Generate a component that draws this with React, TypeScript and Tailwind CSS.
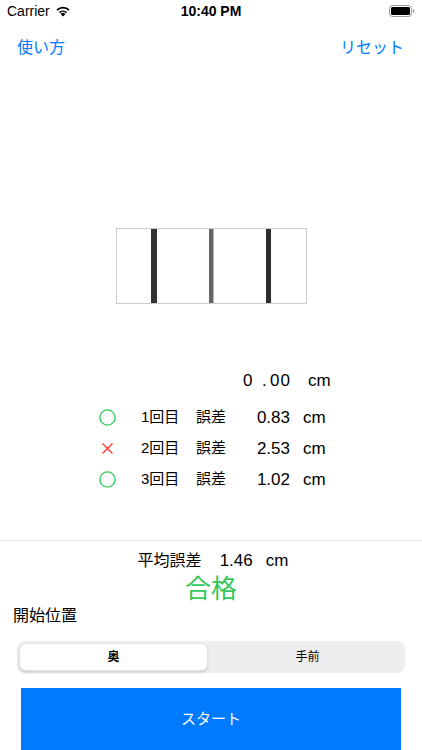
import React from 'react';

const results = [
  { label: '1回目', value: '0.83', ok: true },
  { label: '2回目', value: '2.53', ok: false },
  { label: '3回目', value: '1.02', ok: true },
];

function Wifi() {
  return (
    <svg width="16" height="12" viewBox="0 0 16 12">
      <path d="M8 11.5 L5.6 8.9 A3.4 3.4 0 0 1 10.4 8.9 Z" fill="#000" />
      <path d="M3.9 7.1 A5.8 5.8 0 0 1 12.1 7.1 L10.9 8.3 A4.1 4.1 0 0 0 5.1 8.3 Z" fill="#000" />
      <path d="M1.4 4.6 A9.3 9.3 0 0 1 14.6 4.6 L13.4 5.8 A7.6 7.6 0 0 0 2.6 5.8 Z" fill="#000" />
    </svg>
  );
}

function Battery() {
  return (
    <svg width="26" height="12" viewBox="0 0 26 12">
      <rect x="0.5" y="0.5" width="22" height="11" rx="3" fill="none" stroke="#000" strokeOpacity="0.4" />
      <rect x="2" y="2" width="19" height="8" rx="1.5" fill="#000" />
      <path d="M24 4 Q25.5 4 25.5 6 Q25.5 8 24 8 Z" fill="#000" fillOpacity="0.4" />
    </svg>
  );
}

function Mark({ ok }: { ok: boolean }) {
  return ok ? (
    <svg width="17" height="17" viewBox="0 0 17 17">
      <circle cx="8.5" cy="8.5" r="7.6" fill="none" stroke="#34c759" strokeWidth="1.4" />
    </svg>
  ) : (
    <svg width="17" height="17" viewBox="0 0 17 17">
      <path d="M3.5 3.5 L13.5 13.5 M13.5 3.5 L3.5 13.5" stroke="#ff3b30" strokeWidth="1.4" />
    </svg>
  );
}

export default function App() {
  return (
    <div className="w-[422px] h-[750px] overflow-hidden bg-white text-black font-['Liberation_Sans','Noto_Sans_CJK_JP',sans-serif]">
      {/* Status bar */}
      <div className="grid grid-cols-3 items-center h-[22px] px-[7px]">
        <div className="flex items-center gap-[5px] text-[14px]">
          <span>Carrier</span>
          <Wifi />
        </div>
        <div className="text-center text-[14px] font-semibold">10:40 PM</div>
        <div className="flex justify-end">
          <Battery />
        </div>
      </div>

      {/* Nav */}
      <div className="flex items-center justify-between h-[50px] pt-[2px] pl-[17px] pr-[18px] text-[16px] text-[#007aff]">
        <span>使い方</span>
        <span>リセット</span>
      </div>

      {/* Target box */}
      <div className="mt-[156px] mx-auto w-[191px] h-[76px] border border-[#cccccc]">
        <svg width="189" height="74" viewBox="0 0 189 74">
          <rect x="34" y="0" width="6" height="74" fill="#333333" />
          <rect x="92" y="0" width="4.5" height="74" fill="#666666" />
          <rect x="149" y="0" width="5" height="74" fill="#2e2e2e" />
        </svg>
      </div>

      {/* Current measurement */}
      <div className="mt-[61px] flex items-center h-[31px] pl-[243px] text-[17px]">
        <span className="inline-block w-[19px]">0</span>
        <span className="inline-block w-[8px]">.</span>
        <span className="tracking-[1px]">00</span>
        <span className="ml-[17px]">cm</span>
      </div>

      {/* Results */}
      <div className="mt-[5px]">
        {results.map((r) => (
          <div key={r.label} className="flex items-center h-[31px] pt-[2px] pl-[99px]">
            <div className="w-[17px] flex justify-center">
              <Mark ok={r.ok} />
            </div>
            <span className="ml-[25px] w-[55px] text-[15px]">{r.label}</span>
            <span className="w-[30px] text-[15px]">誤差</span>
            <span className="w-[64px] text-right text-[17px]">{r.value}</span>
            <span className="ml-[13px] text-[17px]">cm</span>
          </div>
        ))}
      </div>

      <div className="mt-[46px] h-px bg-[#e3e3e3]" />

      {/* Average */}
      <div className="mt-[9px] flex items-center justify-center h-[22px] pl-[4px]">
        <span className="text-[16px]">平均誤差</span>
        <span className="ml-[18px] text-[17px]">1.46</span>
        <span className="ml-[13px] text-[17px]">cm</span>
      </div>
      <div className="mt-[2px] h-[30px] flex items-center justify-center text-[26px] text-[#34c759]">合格</div>

      <div className="mt-[1px] h-[22px] flex items-center pl-[13px] text-[16px]">開始位置</div>

      {/* Segmented control */}
      <div className="mt-[14px] mx-[17px] h-[32px] rounded-[8px] bg-[#eeeef0] p-[2px] flex">
        <div className="w-[189px] h-full rounded-[7px] bg-white border border-[#e2e2e2] shadow-[0_2px_3px_rgba(0,0,0,0.12)] flex items-center justify-center text-[12px] font-bold">
          奥
        </div>
        <div className="flex-1 flex items-center justify-center text-[12px] pl-[4px]">手前</div>
      </div>

      {/* Start button */}
      <div className="mt-[15px] mx-[21px] h-[62px] bg-[#007aff] flex items-center justify-center text-white text-[15px]">
        スタート
      </div>
    </div>
  );
}
